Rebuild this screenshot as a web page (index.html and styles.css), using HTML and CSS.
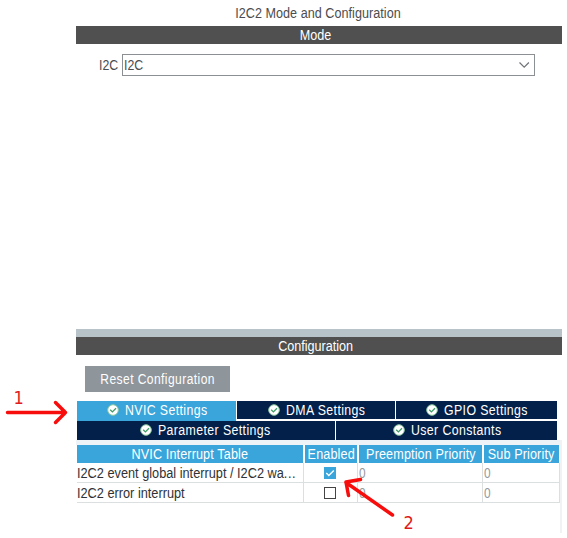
FILE: index.html
```html
<!DOCTYPE html>
<html lang="en">
<head>
<meta charset="utf-8">
<title>I2C2 Mode and Configuration</title>
<link rel="stylesheet" href="styles.css">
</head>
<body>
<svg class="defs" width="0" height="0" aria-hidden="true">
  <symbol id="ok" viewBox="0 0 12 12">
    <circle cx="6" cy="6" r="5.3" fill="#fff" stroke="#8cc9a0" stroke-width="1"/>
    <path d="M3.2 5.7 5.4 7.9 9 4.2" fill="none" stroke="#3f9c68" stroke-width="1.3"/>
  </symbol>
</svg>
<main class="panel">
  <h1 class="title"><span>I2C2 Mode and Configuration</span></h1>
  <h2 class="bar"><span>Mode</span></h2>
  <section class="mode">
    <label class="label"><span>I2C</span></label>
    <div class="combo"><span>I2C</span>
      <svg width="12" height="8" viewBox="0 0 12 8"><path d="M1.500 1.500 6.200 6.200 10.900 1.500" fill="none" stroke="#707377" stroke-width="1.2"/></svg>
    </div>
  </section>
  <div class="splitter"></div>
  <h2 class="bar"><span>Configuration</span></h2>
  <button class="reset"><span>Reset Configuration</span></button>
  <nav class="tabs">
    <div class="tabrow first">
      <div class="tab active"><svg class="ok"><use href="#ok"/></svg><span>NVIC Settings</span></div>
      <div class="tab"><svg class="ok"><use href="#ok"/></svg><span>DMA Settings</span></div>
      <div class="tab"><svg class="ok"><use href="#ok"/></svg><span>GPIO Settings</span></div>
    </div>
    <div class="tabrow second">
      <div class="tab"><svg class="ok"><use href="#ok"/></svg><span>Parameter Settings</span></div>
      <div class="tab"><svg class="ok"><use href="#ok"/></svg><span>User Constants</span></div>
    </div>
  </nav>
  <section class="tablewrap">
    <div class="grid head">
      <div><span>NVIC Interrupt Table</span></div><div><span>Enabled</span></div><div><span>Preemption Priority</span></div><div><span>Sub Priority</span></div>
    </div>
    <div class="grid row">
      <div class="name"><span>I2C2 event global interrupt / I2C2 wa<span class="dots">...</span></span></div>
      <div class="check"><svg width="12" height="12"><rect width="12" height="12" fill="#39a5da"/><path d="M2.3 6 4.8 8.6 9.8 3.4" fill="none" stroke="#fff" stroke-width="1.4"/></svg></div>
      <div class="num"><span>0</span></div><div class="num"><span>0</span></div>
    </div>
    <div class="grid row">
      <div class="name"><span>I2C2 error interrupt</span></div>
      <div class="check"><svg width="12" height="12"><rect x=".5" y=".5" width="11" height="11" fill="#fff" stroke="#444"/></svg></div>
      <div class="num"><span>0</span></div><div class="num"><span>0</span></div>
    </div>
  </section>
</main>
<svg class="marks" width="567" height="538" fill="none" stroke="#f80d0d" stroke-linecap="round" stroke-linejoin="round" stroke-width="3.500">
  <path d="M7.500 412.500H65M55.500 402.500 65.500 412.500 55.500 422.500"/>
  <path d="M392.500 515 346 482.500M360.500 479.500 346 482 348.500 495.500"/>
</svg>
<span class="note one">1</span>
<span class="note two">2</span>
</body>
</html>
```
FILE: styles.css
```css
* { box-sizing: border-box; }
body {
  margin: 0;
  width: 567px;
  height: 538px;
  overflow: hidden;
  background: #fff;
  color: #4b4d50;
  font: 14px/18px "Liberation Sans", Arial, sans-serif;
  white-space: nowrap;
}
.defs { position: absolute; }
.panel { width: 486px; margin-left: 76px; }
/* narrow the face horizontally */
.panel span { display: inline-block; transform: scaleX(.9); }
.panel .dots { transform: none; letter-spacing: .6px; }
h1, h2 { margin: 0; font-size: 14px; font-weight: 400; text-align: center; }
.title { height: 26px; padding: 4px 2px 0 0; letter-spacing: .04px; }
.bar { height: 18px; background: #4f504f; color: #fff; line-height: 19px; padding-right: 6px; }
.mode { height: 285px; padding-top: 10px; display: flex; align-items: flex-start; }
.label { width: 46px; padding-left: 23px; line-height: 23px; }
.panel .label span, .panel .combo span { transform: scaleX(.88); transform-origin: left; }
.combo {
  width: 413px; height: 22px;
  border: 1px solid #8c9095;
  display: flex; align-items: center; justify-content: space-between;
  padding: 0 4px 0 1px;
}
.splitter { height: 8px; background: #b8c3c9; }
.reset {
  display: block; width: 145px; height: 26px; margin: 11px 0 9px 9px; padding: 0;
  border: 0; background: #8e959b; color: #fff; font: inherit; letter-spacing: .5px;
}
.reset span { margin: 0 -8px; }
.panel .reset span { transform: scaleX(.86); }
.tabs { width: 480px; margin-left: 1px; height: 39px; }
.tabrow { display: grid; column-gap: 1px; color: #fff; }
.first { grid-template-columns: 159px 158px 161px; height: 19px; }
.second { grid-template-columns: 258px 221px; height: 20px; padding-top: 1px; }
.tab { height: 18px; background: #03204a; display: flex; align-items: center; justify-content: center; gap: 6px; padding: 0 0 0 2px; letter-spacing: .45px; }
.panel .tab span { transform: scaleX(.88); transform-origin: left; margin-right: -10px; }
.second .tab { height: 19px; padding: 0 0 1px 4px; }
.tab.active { height: 20px; background: #39a5da; z-index: 1; padding-bottom: 2px; }
.ok { width: 12px; height: 12px; }
.tablewrap { height: 93px; padding: 5px 0 0 1px; border-right: 2px solid #f0f2f3; background: linear-gradient(#edf3f6 5px, #fff 5px); }
.grid { display: grid; grid-template-columns: 226px 52px 123px 75px; column-gap: 2px; width: 482px; }
.head > div { height: 18px; background: #39a5da; color: #fff; display: flex; justify-content: center; line-height: 19px; letter-spacing: .15px; }
.head > div:nth-child(2) span { margin-right: -1px; }
.row { height: 20px; grid-template-columns: 227px 54px 125px 77px; column-gap: 0; border-bottom: 1px solid #dcdfe0; line-height: 21px; }
.row > div { border-right: 1px solid #dcdfe0; height: 20px; }
.name { color: #303235; }
.panel .name > span { transform: scaleX(.91); transform-origin: left; }
.check { display: flex; align-items: center; justify-content: center; padding-right: 1px; }
.num { color: #96999c; padding-left: 1px; }
.panel .num span { transform: scaleX(.85); transform-origin: left; }
.marks { position: absolute; left: 0; top: 0; }
.note { position: absolute; font: 18px/20px "DejaVu Sans", sans-serif; color: #e01b1b; transform: scaleX(.9); }
.one { left: 13px; top: 388px; }
.two { left: 403px; top: 513px; }
```
